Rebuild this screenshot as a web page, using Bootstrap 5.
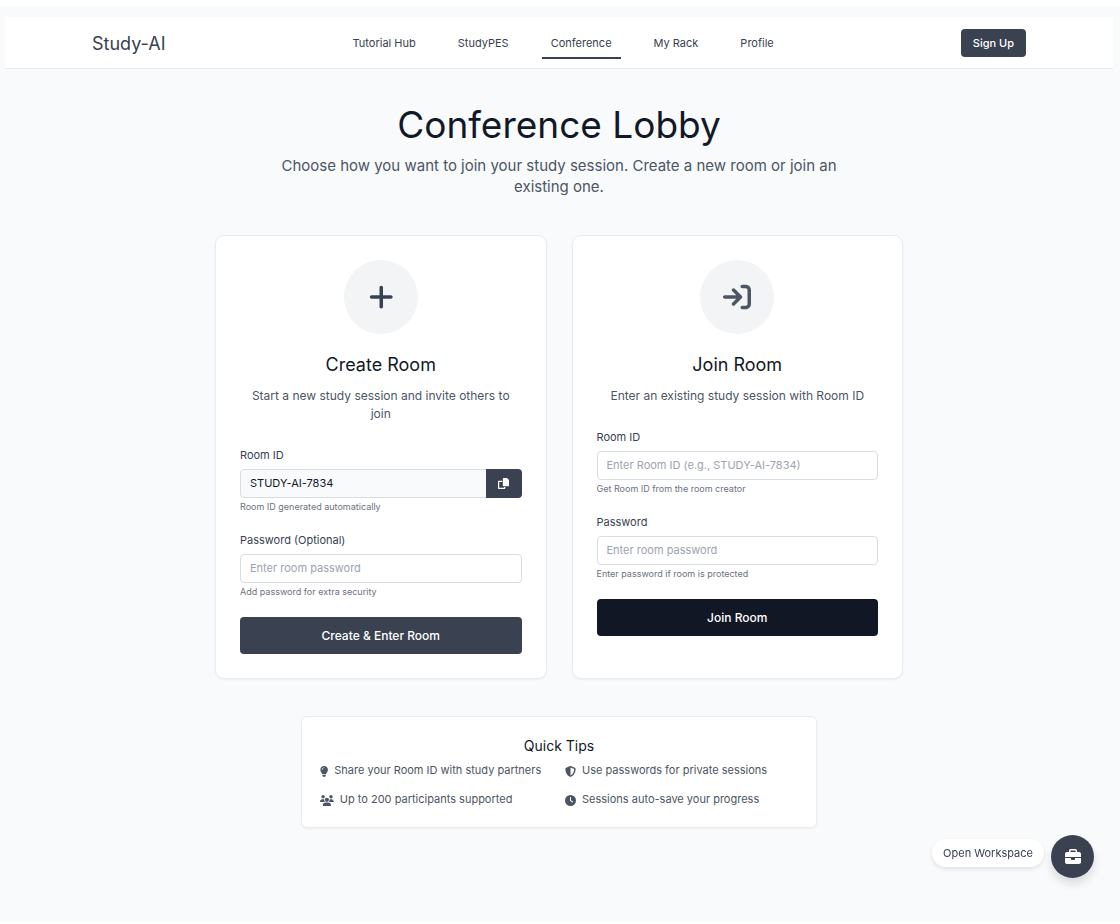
<!DOCTYPE html>
<html lang="en">
<head>
<meta charset="utf-8">
<meta name="viewport" content="width=device-width, initial-scale=1">
<title>Study-AI – Conference Lobby</title>
<link href="https://cdn.jsdelivr.net/npm/bootstrap@5.3.0/dist/css/bootstrap.min.css" rel="stylesheet">
<style>
  :root { --ink: #111827; --slate: #374151; --slate-btn: #3a4150; --muted: #4b5563; }
  body { font-family: Inter, "Liberation Sans", sans-serif; color: var(--slate); background: #fff; padding: 6px 0 2px; font-size: 12px; }
  .shell { background: #f8fafc; padding: 11px 7px 25px 5px; min-height: calc(100vh - 8px); display: flex; flex-direction: column; }
  .frame { background: #f9fafc; flex: 1; }
  .topbar { background: #fff; border-bottom: 1px solid #e8eaed; }
  .topbar-inner { max-width: 934px; min-height: 51px; }
  .brand-name { font-size: 18px; line-height: 28px; padding-top: 2px; color: var(--slate); }
  .main-nav { gap: 24px; }
  .main-nav .nav-link { font-size: 11px; line-height: 16px; padding: 8px 9px 6px; color: var(--slate); border-bottom: 2px solid transparent; }
  .main-nav .nav-link.active { border-bottom-color: var(--slate); }
  .btn-slate, .btn-slate:hover { background: var(--slate-btn); color: #fff; border: 0; }
  .btn-ink, .btn-ink:hover { background: #111725; color: #fff; border: 0; }
  .btn-signup { font-size: 11px; line-height: 18px; font-weight: 500; padding: 5px 12px; border-radius: 4px; }
  h1 { font-size: 37px; line-height: 46px; font-weight: 400; color: var(--ink); margin: 33px 0 7px; }
  .intro { font-size: 15px; line-height: 21px; color: var(--muted); max-width: 576px; margin-bottom: 38px; }
  .lobby { max-width: 688px; gap: 25px; }
  .room-card, .tips { background: #fff; border: 1px solid #e9ebee; box-shadow: 0 1px 2px rgba(0,0,0,.05); }
  .room-card { flex: 1 1 280px; border-radius: 9px; padding: 24px; }
  .disc { width: 74px; height: 74px; background: #f3f4f6; margin-bottom: 18px; }
  .disc-muted { color: var(--muted); }
  h2 { font-size: 18px; line-height: 26px; font-weight: 400; color: var(--ink); margin-bottom: 9px; }
  .desc { font-size: 12px; line-height: 18px; color: var(--muted); padding: 0 4px; margin-bottom: 24px; }
  .field { margin-bottom: 18px; }
  .field .form-label { display: block; font-size: 11px; line-height: 16px; margin-bottom: 6px; color: var(--slate); }
  .field .form-control { font-size: 11px; line-height: 17px; padding: 5px 9px; border-color: #d9dce1; border-radius: 4px; color: var(--ink); }
  .field .form-control::placeholder { color: #9ca3af; }
  .field .form-control[readonly] { background: #f9fafb; }
  .field .btn-copy { width: 36px; padding: 0; border-radius: 4px; }
  .form-text { font-size: 9px; line-height: 14px; margin-top: 2px; color: #6b7280; }
  .btn-room { font-size: 12px; line-height: 17px; font-weight: 500; padding: 10px; border-radius: 4px; }
  .tips { max-width: 516px; border-radius: 6px; padding: 19px 18px; margin-top: 37px; }
  h3 { font-size: 14px; line-height: 20px; font-weight: 400; color: var(--ink); margin-bottom: 6px; }
  .tip-list { display: grid; grid-template-columns: 1fr 1fr; gap: 12px; font-size: 11px; line-height: 17px; color: var(--muted); }
  .tip-list li { display: flex; align-items: center; gap: 6px; }
  .tip-list svg { height: 11px; margin-top: 2px; }
  svg { fill: currentColor; display: block; }
  .workspace { right: 26px; bottom: 46px; gap: 7px; }
  .pill { background: #fff; font-size: 11px; line-height: 16px; padding: 6px 11px; color: var(--slate); box-shadow: 0 2px 4px rgba(0,0,0,.1); margin-bottom: 8px; }
  .fab { width: 43px; height: 43px; padding: 0; box-shadow: 0 6px 10px rgba(0,0,0,.12); }
</style>
</head>
<body>
<div class="shell">
  <div class="frame">
    <header class="topbar">
      <div class="topbar-inner mx-auto d-flex align-items-center justify-content-between">
        <a href="#" class="brand-name text-decoration-none">Study-AI</a>
        <nav class="nav main-nav" aria-label="Main">
          <a class="nav-link" href="#">Tutorial Hub</a>
          <a class="nav-link" href="#">StudyPES</a>
          <a class="nav-link active" aria-current="page" href="#">Conference</a>
          <a class="nav-link" href="#">My Rack</a>
          <a class="nav-link" href="#">Profile</a>
        </nav>
        <button type="button" class="btn btn-slate btn-signup">Sign Up</button>
      </div>
    </header>

    <main class="pb-5">
      <div class="text-center">
        <h1>Conference Lobby</h1>
        <p class="intro mx-auto">Choose how you want to join your study session. Create a new room or join an existing one.</p>
      </div>

      <div class="lobby mx-auto d-flex flex-wrap">
        <section class="room-card">
          <div class="text-center">
            <div class="disc rounded-circle mx-auto d-flex align-items-center justify-content-center">
              <svg height="28" viewBox="0 0 448 512" aria-hidden="true"><path d="M256 80c0-17.700-14.300-32-32-32s-32 14.300-32 32V224H48c-17.700 0-32 14.300-32 32s14.300 32 32 32H192V432c0 17.700 14.300 32 32 32s32-14.300 32-32V288H400c17.700 0 32-14.300 32-32s-14.300-32-32-32H256V80z"/></svg>
            </div>
            <h2>Create Room</h2>
            <p class="desc">Start a new study session and invite others to join</p>
          </div>
          <form>
            <div class="field">
              <label class="form-label" for="newId">Room ID</label>
              <div class="input-group">
                <input id="newId" type="text" class="form-control" value="STUDY-AI-7834" readonly>
                <button type="button" class="btn btn-slate btn-copy d-flex align-items-center justify-content-center" aria-label="Copy Room ID">
                  <svg height="11" viewBox="0 0 512 512" aria-hidden="true"><path d="M272 0H416L512 96V336c0 26.500-21.500 48-48 48H272c-26.500 0-48-21.500-48-48V48c0-26.500 21.500-48 48-48zM48 128h144v56H56V456H280V416h56v48c0 26.500-21.500 48-48 48H48c-26.500 0-48-21.500-48-48V176c0-26.500 21.500-48 48-48z"/></svg>
                </button>
              </div>
              <div class="form-text">Room ID generated automatically</div>
            </div>
            <div class="field">
              <label class="form-label" for="newPass">Password (Optional)</label>
              <input id="newPass" type="password" class="form-control" placeholder="Enter room password">
              <div class="form-text">Add password for extra security</div>
            </div>
            <button type="button" class="btn btn-slate btn-room w-100">Create &amp; Enter Room</button>
          </form>
        </section>

        <section class="room-card">
          <div class="text-center">
            <div class="disc disc-muted rounded-circle mx-auto d-flex align-items-center justify-content-center">
              <svg height="28" viewBox="0 0 512 512" aria-hidden="true"><path d="M352 96h64c17.700 0 32 14.300 32 32v256c0 17.700-14.300 32-32 32h-64c-17.700 0-32 14.300-32 32s14.300 32 32 32h64c53 0 96-43 96-96V128c0-53-43-96-96-96h-64c-17.700 0-32 14.300-32 32s14.300 32 32 32zm-9.400 182.600c12.500-12.500 12.500-32.800 0-45.300l-128-128c-12.500-12.500-32.800-12.500-45.300 0s-12.500 32.800 0 45.300L242.700 224H32c-17.700 0-32 14.300-32 32s14.300 32 32 32h210.700l-73.400 73.400c-12.500 12.500-12.500 32.800 0 45.300s32.800 12.500 45.300 0l128-128z"/></svg>
            </div>
            <h2>Join Room</h2>
            <p class="desc">Enter an existing study session with Room ID</p>
          </div>
          <form>
            <div class="field">
              <label class="form-label" for="joinId">Room ID</label>
              <input id="joinId" type="text" class="form-control" placeholder="Enter Room ID (e.g., STUDY-AI-7834)">
              <div class="form-text">Get Room ID from the room creator</div>
            </div>
            <div class="field">
              <label class="form-label" for="joinPass">Password</label>
              <input id="joinPass" type="password" class="form-control" placeholder="Enter room password">
              <div class="form-text">Enter password if room is protected</div>
            </div>
            <button type="button" class="btn btn-ink btn-room w-100">Join Room</button>
          </form>
        </section>
      </div>

      <section class="tips mx-auto">
        <h3 class="text-center">Quick Tips</h3>
        <ul class="tip-list list-unstyled mb-0">
          <li><svg viewBox="0 0 384 512" aria-hidden="true"><path d="M272 384c9.600-31.900 29.500-59.100 49.200-86.200c5.200-7.100 10.400-14.200 15.400-21.400c19.800-28.500 31.400-63 31.400-100.300C368 78.800 289.200 0 192 0S16 78.800 16 176c0 37.300 11.600 71.900 31.400 100.300c5 7.200 10.200 14.300 15.400 21.400c19.800 27.100 39.700 54.400 49.200 86.200H272zM192 512c44.200 0 80-35.800 80-80V416H112v16c0 44.200 35.800 80 80 80zM112 176c0 8.800-7.200 16-16 16s-16-7.200-16-16c0-61.900 50.100-112 112-112c8.800 0 16 7.200 16 16s-7.200 16-16 16c-44.200 0-80 35.800-80 80z"/></svg>Share your Room ID with study partners</li>
          <li><svg viewBox="0 0 512 512" aria-hidden="true"><path d="M256 0c4.600 0 9.200 1 13.400 2.900L457.700 82.800c22 9.300 38.400 31 38.300 57.200c-.5 99.200-41.300 280.700-213.600 363.200c-16.700 8-36.100 8-52.800 0C57.300 420.700 16.500 239.200 16 140c-.1-26.200 16.300-47.900 38.300-57.200L242.700 2.900C246.800 1 251.400 0 256 0zm0 66.800V444.800C394 378 431.100 230.100 432 141.400L256 66.800z"/></svg>Use passwords for private sessions</li>
          <li><svg viewBox="0 0 640 512" aria-hidden="true"><circle cx="144" cy="80" r="80"/><circle cx="512" cy="80" r="80"/><circle cx="320" cy="224" r="96"/><path d="M0 298.700C0 239.800 47.800 192 106.700 192h42.700c15.900 0 31 3.500 44.600 9.700c-1.300 7.200-1.900 14.700-1.900 22.300c0 38.200 16.800 72.500 43.300 96H21.300C9.600 320 0 310.400 0 298.700zM405.300 320c26.600-23.500 43.300-57.800 43.300-96c0-7.600-.7-15-1.900-22.300c13.600-6.300 28.700-9.700 44.600-9.700h42.700C592.200 192 640 239.800 640 298.700c0 11.800-9.600 21.300-21.300 21.300H405.300zM128 485.300C128 411.700 187.700 352 261.300 352h117.400C452.300 352 512 411.700 512 485.300c0 14.700-11.900 26.700-26.700 26.700H154.700c-14.700 0-26.700-11.900-26.700-26.700z"/></svg>Up to 200 participants supported</li>
          <li><svg viewBox="0 0 512 512" aria-hidden="true"><path d="M256 0a256 256 0 1 1 0 512A256 256 0 1 1 256 0zM232 120V256c0 8 4 15.500 10.700 20l96 64c11 7.400 25.900 4.400 33.300-6.700s4.400-25.900-6.700-33.300L280 243.200V120c0-13.300-10.700-24-24-24s-24 10.700-24 24z"/></svg>Sessions auto-save your progress</li>
        </ul>
      </section>
    </main>
  </div>
</div>

<div class="workspace position-fixed d-flex align-items-center">
  <span class="pill rounded-pill">Open Workspace</span>
  <button type="button" class="btn btn-slate fab rounded-circle d-flex align-items-center justify-content-center" aria-label="Open Workspace">
    <svg height="16" viewBox="0 0 512 512" aria-hidden="true"><path d="M184 48H328c4.400 0 8 3.600 8 8V96H176V56c0-4.400 3.600-8 8-8zm-56 8V96H64C28.700 96 0 124.700 0 160v96H192 320 512V160c0-35.300-28.700-64-64-64H384V56c0-30.900-25.100-56-56-56H184c-30.900 0-56 25.100-56 56zM512 288H320v32c0 17.700-14.300 32-32 32H224c-17.700 0-32-14.300-32-32V288H0V416c0 35.300 28.700 64 64 64H448c35.300 0 64-28.700 64-64V288z"/></svg>
  </button>
</div>
<script src="https://cdn.jsdelivr.net/npm/bootstrap@5.3.0/dist/js/bootstrap.bundle.min.js"></script>
</body>
</html>
